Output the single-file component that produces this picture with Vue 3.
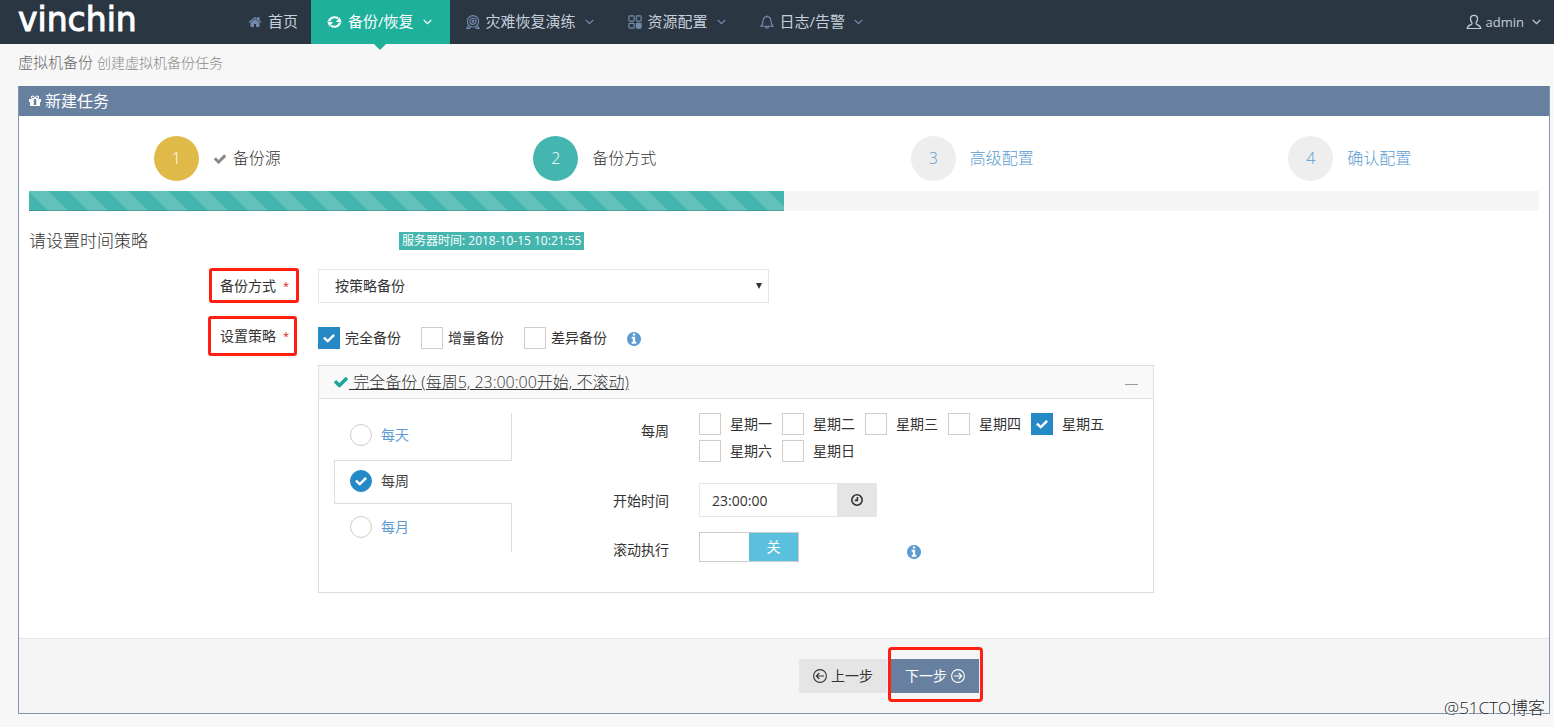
<script setup>
import { ref } from 'vue'

const navItems = [
  { label: '首页', icon: 'home', menu: false },
  { label: '备份/恢复', icon: 'refresh', menu: true, active: true },
  { label: '灾难恢复演练', icon: 'camera', menu: true },
  { label: '资源配置', icon: 'grid', menu: true },
  { label: '日志/告警', icon: 'bell', menu: true },
]

const steps = [
  { no: 1, label: '备份源', state: 'done' },
  { no: 2, label: '备份方式', state: 'current' },
  { no: 3, label: '高级配置', state: 'todo' },
  { no: 4, label: '确认配置', state: 'todo' },
]

const strategies = ref([
  { id: 'full', label: '完全备份', on: true },
  { id: 'incr', label: '增量备份', on: false },
  { id: 'diff', label: '差异备份', on: false },
])

const periods = [
  { id: 'day', label: '每天' },
  { id: 'week', label: '每周' },
  { id: 'month', label: '每月' },
]
const period = ref('week')

const weekdays = ref([
  { label: '星期一', on: false },
  { label: '星期二', on: false },
  { label: '星期三', on: false },
  { label: '星期四', on: false },
  { label: '星期五', on: true },
  { label: '星期六', on: false },
  { label: '星期日', on: false },
])

const mode = ref('policy')
const startTime = ref('23:00:00')
const rolling = ref(false)

const solid = {
  home: 'M1472 992v480q0 26-19 45t-45 19h-384v-384h-256v384h-384q-26 0-45-19t-19-45v-480q0-1 .5-3t.5-3l575-474 575 474q1 2 1 6zm223-69l-62 74q-8 9-21 11h-3q-13 0-21-7l-692-577-692 577q-12 8-24 7-13-2-21-11l-62-74q-8-10-7-23.5t11-21.5l719-599q32-26 76-26t76 26l244 204v-195q0-14 9-23t23-9h192q14 0 23 9t9 23v408l219 182q10 8 11 21.5t-7 23.5z',
  gift: 'M1056 1356v-716h-320v716q0 25 18 38.5t46 13.5h192q28 0 46-13.5t18-38.5zm-456-844h195l-126-161q-26-31-69-31-40 0-68 28t-28 68 28 68 68 28zm688-96q0-40-28-68t-68-28q-43 0-69 31l-125 161h194q40 0 68-28t28-68zm376 256v320q0 14-9 23t-23 9h-96v416q0 40-28 68t-68 28h-1088q-40 0-68-28t-28-68v-416h-96q-14 0-23-9t-9-23v-320q0-14 9-23t23-9h440q-93 0-158.5-65.5t-65.5-158.5 65.5-158.5 158.5-65.5q107 0 168 77l128 165 128-165q61-77 168-77 93 0 158.5 65.5t65.5 158.5-65.5 158.5-158.5 65.5h440q14 0 23 9t9 23z',
  check: 'M1671 566q0 40-28 68l-724 724-136 136q-28 28-68 28t-68-28l-136-136-362-362q-28-28-28-68t28-68l136-136q28-28 68-28t68 28l294 295 656-657q28-28 68-28t68 28l136 136q28 28 28 68z',
  info: 'M1152 1376v-160q0-14-9-23t-23-9h-96v-512q0-14-9-23t-23-9h-320q-14 0-23 9t-9 23v160q0 14 9 23t23 9h96v320h-96q-14 0-23 9t-9 23v160q0 14 9 23t23 9h448q14 0 23-9t9-23zm-128-896v-160q0-14-9-23t-23-9h-192q-14 0-23 9t-9 23v160q0 14 9 23t23 9h192q14 0 23-9t9-23zm640 416q0 209-103 385.5t-279.5 279.5-385.5 103-385.5-103-279.5-279.5-103-385.5 103-385.5 279.5-279.5 385.5-103 385.5 103 279.5 279.5 103 385.5z',
}
</script>

<template>
  <div class="page">
    <header class="topbar">
      <a class="logo" href="#">vinchin</a>
      <nav class="nav">
        <a v-for="item in navItems" :key="item.label" href="#" class="nav-item" :class="{ active: item.active, home: !item.menu }">
          <svg v-if="item.icon === 'refresh'" class="nav-icon" viewBox="0 0 16 14">
            <path d="M2.200 6.300A6 5.400 0 0 1 11.900 3.200M13.800 7.700A6 5.400 0 0 1 4.100 10.800" fill="none" stroke="currentColor" stroke-width="2.200" />
            <path d="M9.400 6.400h6.400L12.900 1.500zM6.600 7.600H.2l2.900 4.900z" transform="rotate(8 8 7)" />
          </svg>
          <svg v-else-if="solid[item.icon]" class="nav-icon" viewBox="0 0 1792 1792"><path :d="solid[item.icon]" /></svg>
          <svg v-else class="nav-icon line" viewBox="0 0 16 16">
            <template v-if="item.icon === 'camera'">
              <circle cx="8" cy="7.200" r="6.500" /><circle cx="8" cy="7.200" r="3.500" /><circle cx="8" cy="7.200" r="1" />
              <path d="M3.200 11.800 1 15.300h3l1.600-2M12.800 11.800l2.200 3.500h-3l-1.600-2" />
            </template>
            <template v-else-if="item.icon === 'grid'">
              <rect x="1" y="1" width="6" height="6" rx="1" /><rect x="9.500" y="1" width="5.500" height="6" rx="1" />
              <rect x="1" y="9.500" width="6" height="5.500" rx="1" /><rect class="fill" x="9.500" y="9.500" width="5.500" height="5.500" rx="1" />
            </template>
            <path v-else d="M8 .6v1.200M1 12.900h14c-1.700-1.300-2.300-3-2.500-6.200C12.300 3.600 10.600 1.800 8 1.800S3.700 3.600 3.500 6.700C3.300 9.900 2.700 11.600 1 12.900zM6.300 13.200c.1 2.600 3.300 2.600 3.400 0" />
          </svg>
          <span class="nav-label">{{ item.label }}</span>
          <svg v-if="item.menu" class="chevron" viewBox="0 0 9 6"><path d="M.7.9 4.500 4.700 8.300.9" /></svg>
        </a>
      </nav>
      <button type="button" class="user">
        <svg class="user-icon" viewBox="0 0 16 16"><path d="M5.900 8.700C3.700 6.200 3.700 1.300 8 1.300s4.300 4.900 2.100 7.400c-.4.900.1 1.500 1 1.900 2.200.9 3.400 1.500 3.700 3.900H1.200c.3-2.400 1.500-3 3.700-3.900.9-.4 1.400-1 1-1.900z" /></svg>
        <span>admin</span>
        <svg class="chevron" viewBox="0 0 9 6"><path d="M.7.9 4.500 4.700 8.300.9" /></svg>
      </button>
    </header>

    <h1 class="page-title">虚拟机备份 <small>创建虚拟机备份任务</small></h1>

    <main class="panel">
      <h2 class="panel-title">
        <svg class="gift" viewBox="0 0 1792 1792"><path :d="solid.gift" /></svg>新建任务
      </h2>

      <div class="panel-body">
        <ol class="steps">
          <li v-for="s in steps" :key="s.no">
            <a href="#" class="step" :class="s.state">
              <span class="step-no">{{ s.no }}</span>
              <svg v-if="s.state === 'done'" class="step-check" viewBox="0 0 1792 1792"><path :d="solid.check" /></svg>
              <span class="step-name">{{ s.label }}</span>
            </a>
          </li>
        </ol>
        <div class="progress"><div class="progress-bar"></div></div>

        <div class="section-head">
          <h3>请设置时间策略</h3>
          <span class="clock-badge">服务器时间: 2018-10-15 10:21:55</span>
        </div>

        <div class="form-row">
          <label class="field-label" for="mode">备份方式<b>*</b></label>
          <div class="select-wrap">
            <select id="mode" v-model="mode">
              <option value="policy">按策略备份</option>
            </select>
            <svg class="caret" viewBox="0 0 6 6"><path d="M0 0h6L3 6z" /></svg>
          </div>
        </div>

        <div class="form-row strategy-row">
          <span id="strategy-label" class="field-label tall">设置策略<b>*</b></span>
          <div class="strategies" role="group" aria-labelledby="strategy-label">
            <label v-for="s in strategies" :key="s.id" class="tick">
              <input v-model="s.on" type="checkbox" /><span>{{ s.label }}</span>
            </label>
            <svg class="info" viewBox="128 128 1536 1536"><path :d="solid.info" /></svg>
          </div>
        </div>

        <div class="form-row">
          <section class="policy">
            <header class="policy-head">
              <a href="#"><svg viewBox="0 0 1792 1792"><path :d="solid.check" /></svg><span>&nbsp;完全备份 (每周5, 23:00:00开始, 不滚动)</span></a>
              <button type="button" class="collapse" aria-label="收起"><i></i></button>
            </header>
            <div class="policy-body">
              <div class="tabs">
                <label v-for="p in periods" :key="p.id" class="tab" :class="{ on: period === p.id }">
                  <input v-model="period" type="radio" name="period" :value="p.id" /><span>{{ p.label }}</span>
                </label>
              </div>
              <div class="settings">
                <span id="week-label" class="set-label">每周</span>
                <div class="weekdays" role="group" aria-labelledby="week-label">
                  <label v-for="d in weekdays" :key="d.label" class="day">
                    <input v-model="d.on" type="checkbox" /><span>{{ d.label }}</span>
                  </label>
                </div>
                <label class="set-label" for="start">开始时间</label>
                <div class="time">
                  <input id="start" v-model="startTime" type="text" />
                  <button type="button" aria-label="选择时间">
                    <svg viewBox="0 0 14 14"><circle cx="7" cy="7" r="5.200" /><path d="M7.400 4v3.400H4.800" /></svg>
                  </button>
                </div>
                <label class="set-label" for="rolling">滚动执行</label>
                <div class="rolling">
                  <label class="switch">
                    <input id="rolling" v-model="rolling" type="checkbox" />
                    <span class="knob"></span><span class="off">关</span>
                  </label>
                  <svg class="info" viewBox="128 128 1536 1536"><path :d="solid.info" /></svg>
                </div>
              </div>
            </div>
          </section>
        </div>
      </div>

      <footer class="actions">
        <button type="button" class="btn">
          <svg viewBox="0 0 14 14"><circle cx="7" cy="7" r="6.400" /><path d="M11 7H3.300M6.300 4 3.300 7l3 3" /></svg>上一步
        </button>
        <button type="button" class="btn next">
          下一步<svg viewBox="0 0 14 14"><circle cx="7" cy="7" r="6.400" /><path d="M3 7h7.700M7.700 4l3 3-3 3" /></svg>
        </button>
      </footer>
    </main>
    <span class="credit">@51CTO博客</span>
  </div>
</template>

<style>
body {
  background: #f7f7f7;
}
</style>

<style scoped>
* {
  box-sizing: border-box;
}
.page {
  position: relative;
  padding-bottom: 13px;
  color: #333;
  font: 14px/20px "Open Sans", "Noto Sans CJK SC", sans-serif;
}
a {
  color: inherit;
  text-decoration: none;
}
button {
  border: 0;
  background: none;
  padding: 0;
  color: inherit;
  font: inherit;
}
svg {
  display: block;
  flex: none;
  fill: currentColor;
}

/* top bar */
.topbar {
  display: flex;
  height: 44px;
  background: #2b3643;
}
.logo {
  width: 232px;
  padding-left: 18px;
  color: #fff;
  font: 33px/40px "DejaVu Sans", sans-serif;
  -webkit-text-stroke: 1px #fff;
}
.nav {
  display: flex;
  flex: 1;
}
.nav-item {
  position: relative;
  display: flex;
  align-items: center;
  padding: 0 18px 0 16px;
  color: #c6cfda;
  font-size: 15px;
}
.nav-item.home {
  padding-right: 13px;
}
.nav-icon {
  width: 14px;
  height: 14px;
  margin-right: 6px;
  color: #738bab;
}
.nav-label {
  padding-bottom: 2px;
  white-space: nowrap;
}
.nav-icon.line {
  margin-right: 6px;
}
.line {
  fill: none;
  stroke: currentColor;
  stroke-width: 1.3;
}
.line .fill {
  fill: currentColor;
}
.chevron {
  width: 9px;
  height: 6px;
  margin-left: 9px;
  fill: none;
  stroke: #738bab;
  stroke-width: 1.3;
}
.active {
  background: #1eb09b;
  color: #fff;
}
.active .nav-icon {
  width: 15px;
  color: #fff;
}
.active .chevron {
  stroke: #fff;
}
.active::after {
  content: "";
  position: absolute;
  left: 50%;
  top: 44px;
  margin-left: -6px;
  border: 6px solid transparent;
  border-top-color: #1eb09b;
  border-bottom: 0;
}
.user {
  display: flex;
  align-items: center;
  padding-right: 13px;
  color: #c6cfda;
  font-size: 13px;
}
.user-icon {
  width: 16px;
  height: 16px;
  margin-right: 4px;
  fill: none;
  stroke: currentColor;
  stroke-width: 1.2;
}
.user .chevron {
  margin-left: 8px;
  stroke: #c6cfda;
}

.page-title {
  margin: 7px 18px 12px;
  color: #666;
  font-size: 15px;
  font-weight: 300;
  line-height: 22px;
}
.page-title small {
  color: #888;
  font-size: 14px;
}

/* panel */
.panel {
  margin: 0 4px 0 18px;
  border: 1px solid #8195b0;
  border-top: 0;
  background: #fff;
}
.panel-title {
  display: flex;
  align-items: center;
  gap: 3px;
  height: 30px;
  margin: 0;
  padding-left: 9px;
  background: #67809f;
  color: #fff;
  font-size: 16px;
  font-weight: 400;
}
.gift {
  width: 14px;
  height: 14px;
}
.panel-body {
  padding: 20px 10px 45px;
}
.steps {
  display: grid;
  grid-template-columns: repeat(4, 1fr);
  margin: 0 0 10px;
  padding: 0;
  list-style: none;
}
.step {
  display: flex;
  align-items: center;
  justify-content: center;
  padding-right: 1px;
  color: #5b9bd1;
  font-size: 16px;
  font-weight: 300;
}
.step-no {
  width: 45px;
  margin-right: 14px;
  border-radius: 50%;
  background: #eee;
  line-height: 45px;
  text-align: center;
}
.step-name {
  padding-bottom: 2px;
}
.step.done,
.step.current {
  color: #333;
}
.done .step-no {
  background: #dfba49;
  color: #fff;
}
.current .step-no {
  background: #45b6af;
  color: #fff;
}
.step-check {
  width: 14px;
  height: 14px;
  margin-right: 6px;
  color: #888;
}
.progress {
  height: 20px;
  background: #f5f5f5;
}
.progress-bar {
  width: 50%;
  height: 20px;
  background: linear-gradient(45deg, rgba(255, 255, 255, .15) 25%, transparent 25%, transparent 50%, rgba(255, 255, 255, .15) 50%, rgba(255, 255, 255, .15) 75%, transparent 75%) 0 0 / 40px 40px #45b6af;
  box-shadow: inset 0 -1px 0 rgba(0, 0, 0, .15);
}

/* form */
.section-head {
  display: grid;
  grid-template-columns: 370px auto;
  justify-content: start;
  align-items: center;
  margin: 18px 0 15px;
}
.section-head h3 {
  margin: 0;
  font-size: 17px;
  font-weight: 300;
  line-height: 24px;
}
.clock-badge {
  padding: 0 3px;
  background: #45b6af;
  color: #fff;
  font-size: 12px;
  line-height: 18px;
}
.form-row {
  display: flex;
  align-items: center;
  padding-left: 289px;
}
.field-label {
  display: flex;
  flex: none;
  gap: 7px;
  width: 90px;
  margin: 0 19px 0 -109px;
  padding: 5px 0 4px 8px;
  border: 3px solid #ff1e10;
  border-radius: 3px;
  line-height: 20px;
}
.field-label.tall {
  width: 89px;
  margin: 0 21px 0 -110px;
  padding: 7px 0 7px 9px;
}
.field-label b {
  color: #e02222;
  font-size: 11px;
  font-weight: 400;
}
.select-wrap {
  position: relative;
  flex: 0 1 451px;
}
select {
  display: block;
  width: 100%;
  height: 34px;
  padding: 0 30px 0 16px;
  border: 1px solid #e5e5e5;
  border-radius: 0;
  background: #fff;
  color: #333;
  font: inherit;
  appearance: none;
}
.caret {
  position: absolute;
  right: 7px;
  top: 14px;
  width: 6px;
  height: 6px;
  pointer-events: none;
}
.strategy-row {
  margin: 13px 0 9px;
}
.strategies {
  display: flex;
  align-items: center;
  gap: 20px;
  padding-top: 4px;
}
.tick,
.day {
  display: flex;
  align-items: center;
  gap: 5px;
  white-space: nowrap;
}
.day {
  gap: 9px;
}
input[type="checkbox"],
input[type="radio"] {
  position: relative;
  flex: none;
  width: 22px;
  height: 22px;
  margin: 0;
  border: 1px solid #d0cdc7;
  background: #fff;
  appearance: none;
}
input[type="radio"] {
  border-radius: 50%;
}
input[type="checkbox"]:checked,
input[type="radio"]:checked {
  border-color: #2489c5;
  background: #2489c5;
}
input:checked::after {
  content: "";
  position: absolute;
  left: 50%;
  top: 50%;
  width: 12px;
  height: 9px;
  margin: -4px 0 0 -6px;
  background: #fff;
  clip-path: polygon(0 50%, 15% 31%, 40% 60%, 85% 0, 100% 19%, 40% 96%);
}
.info {
  width: 14px;
  height: 14px;
  margin-top: 2px;
  color: #5b9bd1;
}

/* policy box */
.policy {
  flex: 0 1 836px;
  border: 1px solid #ddd;
}
.policy-head {
  display: flex;
  align-items: center;
  justify-content: space-between;
  height: 33px;
  padding: 0 15px 0 14px;
  border-bottom: 1px solid #ddd;
  background: #f9f9f9;
}
.policy-head a {
  display: flex;
  align-items: center;
  font-size: 16px;
  font-weight: 300;
}
.policy-head a span {
  text-decoration: underline;
}
.policy-head svg {
  width: 16px;
  height: 16px;
  color: #1da59b;
}
.collapse {
  padding: 8px 0 4px;
}
.collapse i {
  display: block;
  width: 13px;
  height: 1px;
  background: #999;
}
.policy-body {
  display: flex;
  padding: 14px 15px 30px;
}
.tabs {
  display: flex;
  flex: none;
  flex-direction: column;
  width: 178px;
}
.tab {
  display: flex;
  align-items: center;
  gap: 9px;
  height: 47px;
  padding: 0 0 4px 16px;
  border-right: 1px solid #ddd;
  color: #5b9bd1;
}
.tab.on {
  height: 44px;
  padding: 0 0 2px 15px;
  border: 1px solid #ddd;
  border-right: 0;
  color: #444;
}
.tab.on + .tab {
  height: 48px;
  padding-bottom: 2px;
}
.settings {
  display: grid;
  grid-template-columns: 157px 1fr;
  flex: 1;
  column-gap: 30px;
  row-gap: 15px;
}
.set-label {
  padding-top: 8px;
  text-align: right;
}
.weekdays {
  display: grid;
  grid-template-columns: repeat(5, 83px);
  row-gap: 5px;
  margin-bottom: 6px;
}
.time {
  display: flex;
}
.time input {
  width: 138px;
  height: 34px;
  padding: 0 12px;
  border: 1px solid #e5e5e5;
  border-right: 0;
  border-radius: 0;
  background: #fff;
  color: #333;
  font: inherit;
}
.time button {
  display: grid;
  place-items: center;
  width: 40px;
  background: #e5e5e5;
}
.time svg {
  width: 14px;
  height: 14px;
  fill: none;
  stroke: #333;
  stroke-width: 1.6;
}
.rolling {
  display: flex;
  align-items: center;
  gap: 108px;
}
.switch {
  position: relative;
  display: flex;
  width: 100px;
  height: 30px;
  border: 1px solid #ccc;
}
.switch input[type="checkbox"] {
  position: absolute;
  inset: 0;
  width: 100%;
  height: 100%;
  opacity: 0;
}
.knob {
  flex: 1;
  background: #fff;
}
.off {
  flex: 1;
  background: #5bc0de;
  color: #fff;
  line-height: 28px;
  text-align: center;
}
.rolling .info {
  margin-top: 10px;
}

/* footer */
.actions {
  display: flex;
  justify-content: center;
  gap: 4px;
  padding: 20px 0;
  padding-left: 210px;
  border-top: 1px solid #e5e5e5;
  background: #f5f5f5;
}
.btn {
  position: relative;
  display: flex;
  align-items: center;
  gap: 4px;
  height: 34px;
  padding: 0 14px;
  background: #e5e5e5;
}
.btn svg {
  width: 14px;
  height: 14px;
  fill: none;
  stroke: currentColor;
  stroke-width: 1.1;
}
.next {
  background: #67809f;
  color: #fff;
}
.next::after {
  content: "";
  position: absolute;
  inset: -12px -4px -9px -3px;
  border: 3px solid #ff1e10;
  border-radius: 4px;
}
.credit {
  position: absolute;
  right: 9px;
  bottom: 8px;
  color: #222;
  font-size: 17px;
  font-weight: 300;
  line-height: 22px;
  text-shadow: -1px -1px 0 #fff, 1px 1px 0 #fff;
}
</style>
